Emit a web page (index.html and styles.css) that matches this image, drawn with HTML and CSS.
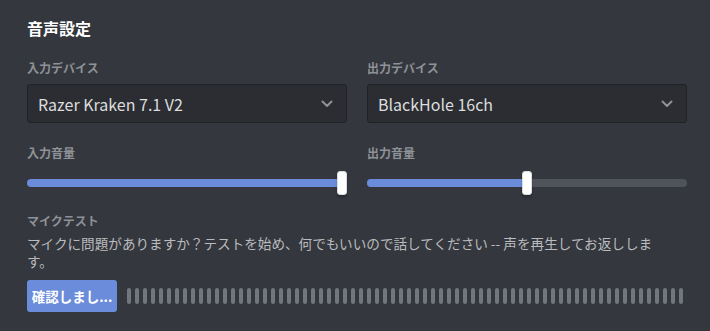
FILE: index.html
```html
<!DOCTYPE html>
<html lang="ja">
<head>
<meta charset="utf-8">
<title>音声設定</title>
<link rel="stylesheet" href="styles.css">
</head>
<body>
<div class="page">
  <h2 class="title">音声設定</h2>
  <div class="grid">
    <div class="col">
      <div class="label">入力デバイス</div>
      <div class="select">
        <span class="select-value">Razer Kraken 7.1 V2</span>
        <svg class="chevron" width="12" height="8" viewBox="0 0 12 8"><path d="M1.5 1.5 L6 6 L10.5 1.5" fill="none" stroke="currentColor" stroke-width="2" stroke-linecap="round" stroke-linejoin="round"/></svg>
      </div>
    </div>
    <div class="col">
      <div class="label">出力デバイス</div>
      <div class="select">
        <span class="select-value">BlackHole 16ch</span>
        <svg class="chevron" width="12" height="8" viewBox="0 0 12 8"><path d="M1.5 1.5 L6 6 L10.5 1.5" fill="none" stroke="currentColor" stroke-width="2" stroke-linecap="round" stroke-linejoin="round"/></svg>
      </div>
    </div>
    <div class="col">
      <div class="label label-vol">入力音量</div>
      <div class="slider">
        <div class="track"><div class="fill" style="width: 100%"></div></div>
        <div class="thumb" style="left: calc((100% - 10px) * 1)"></div>
      </div>
    </div>
    <div class="col">
      <div class="label label-vol">出力音量</div>
      <div class="slider">
        <div class="track"><div class="fill" style="width: 50%"></div></div>
        <div class="thumb" style="left: calc((100% - 10px) * 0.5)"></div>
      </div>
    </div>
  </div>
  <div class="label label-test">マイクテスト</div>
  <p class="desc">マイクに問題がありますか？テストを始め、何でもいいので話してください -- 声を再生してお返しします。</p>
  <div class="test-row">
    <button class="btn">確認しまし...</button>
    <div class="meter">
      <span></span><span></span><span></span><span></span><span></span><span></span><span></span><span></span><span></span><span></span>
      <span></span><span></span><span></span><span></span><span></span><span></span><span></span><span></span><span></span><span></span>
      <span></span><span></span><span></span><span></span><span></span><span></span><span></span><span></span><span></span><span></span>
      <span></span><span></span><span></span><span></span><span></span><span></span><span></span><span></span><span></span><span></span>
      <span></span><span></span><span></span><span></span><span></span><span></span><span></span><span></span><span></span><span></span>
      <span></span><span></span><span></span><span></span><span></span><span></span><span></span><span></span><span></span><span></span>
      <span></span><span></span><span></span><span></span><span></span><span></span><span></span><span></span><span></span><span></span>
    </div>
  </div>
</div>
</body>
</html>
```
FILE: styles.css
```css
html, body {
  margin: 0;
  padding: 0;
  background: #34373d;
  height: 100%;
}
body {
  font-family: "Noto Sans CJK JP", "Noto Sans", sans-serif;
  color: #dcddde;
}
.page {
  padding: 18px 23px 0 27px;
}
.title {
  margin: 0 0 22px;
  font-size: 16px;
  line-height: 20px;
  font-weight: 700;
  color: #ffffff;
}
.grid {
  display: grid;
  grid-template-columns: 1fr 1fr;
  column-gap: 20px;
  row-gap: 22px;
}
.label {
  font-size: 12px;
  line-height: 16px;
  font-weight: 700;
  color: #8e9297;
  margin-bottom: 8px;
}
.label-vol {
  margin-bottom: 10px;
}
.select {
  box-sizing: border-box;
  height: 39px;
  display: flex;
  align-items: center;
  justify-content: space-between;
  padding: 0 13px 0 10px;
  background: #2b2d32;
  border: 1px solid #202225;
  border-radius: 3px;
}
.select-value {
  font-size: 16px;
  color: #dcddde;
}
.chevron {
  color: #8e9297;
}
.slider {
  position: relative;
  height: 24px;
  display: flex;
  align-items: center;
}
.track {
  flex: 1;
  height: 8px;
  border-radius: 4px;
  background: #4f545c;
  overflow: hidden;
}
.fill {
  height: 100%;
  background: #6a8cda;
}
.thumb {
  position: absolute;
  top: 0;
  box-sizing: border-box;
  width: 10px;
  height: 24px;
  border-radius: 3px;
  background: #ffffff;
  border: 1px solid #dcddde;
  box-shadow: 0 3px 1px rgba(0,0,0,0.05), 0 2px 2px rgba(0,0,0,0.1), 0 3px 3px rgba(0,0,0,0.05);
}
.label-test {
  margin-top: 18px;
  margin-bottom: 5px;
}
.desc {
  margin: 0 0 10px;
  padding-right: 12px;
  font-size: 13.6px;
  line-height: 18px;
  color: #b9bbbe;
}
.test-row {
  display: flex;
  align-items: center;
  gap: 10px;
}
.btn {
  width: 90px;
  height: 32px;
  border: 0;
  border-radius: 3px;
  background: #6a8cda;
  color: #ffffff;
  font-family: "Noto Sans CJK JP", "Noto Sans", sans-serif;
  font-size: 13.5px;
  font-weight: 700;
  padding: 0;
  white-space: nowrap;
}
.meter {
  display: flex;
  gap: 4px;
}
.meter span {
  width: 4px;
  height: 16px;
  border-radius: 2px;
  background: #72767d;
}
```
